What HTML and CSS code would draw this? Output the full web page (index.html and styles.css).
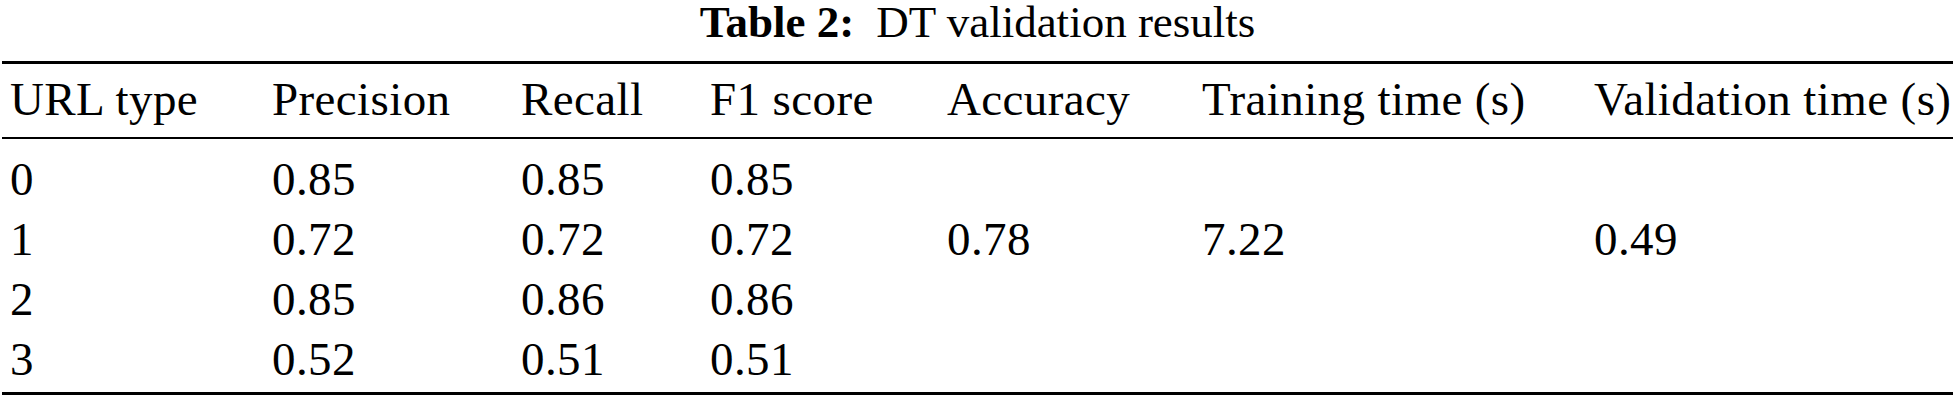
FILE: index.html
```html
<!DOCTYPE html>
<html lang="en">
<head>
<meta charset="utf-8">
<title>Table 2: DT validation results</title>
<link rel="stylesheet" href="styles.css">
</head>
<body>
<div class="caption"><span class="label">Table 2:</span>DT validation results</div>
<table class="results">
  <colgroup>
    <col class="c1"><col class="c2"><col class="c3"><col class="c4"><col class="c5"><col class="c6"><col class="c7">
  </colgroup>
  <thead>
    <tr><th>URL type</th><th>Precision</th><th>Recall</th><th>F1 score</th><th>Accuracy</th><th>Training time (s)</th><th>Validation time (s)</th></tr>
  </thead>
  <tbody>
    <tr class="first"><td>0</td><td>0.85</td><td>0.85</td><td>0.85</td><td></td><td></td><td></td></tr>
    <tr><td>1</td><td>0.72</td><td>0.72</td><td>0.72</td><td>0.78</td><td>7.22</td><td>0.49</td></tr>
    <tr><td>2</td><td>0.85</td><td>0.86</td><td>0.86</td><td></td><td></td><td></td></tr>
    <tr class="last"><td>3</td><td>0.52</td><td>0.51</td><td>0.51</td><td></td><td></td><td></td></tr>
  </tbody>
</table>
</body>
</html>
```
FILE: styles.css
```css
html, body {
  margin: 0;
  padding: 0;
  background: #ffffff;
}
body {
  font-family: "Liberation Serif", "Times New Roman", serif;
  color: #000000;
}
.caption {
  text-align: center;
  font-size: 45px;
  line-height: 44px;
  height: 44px;
  margin-bottom: 17px;
  white-space: nowrap;
}
.caption .label {
  font-weight: bold;
  margin-right: 22px;
}
.results {
  margin: 0 0 0 2px;
  width: 1951px;
  table-layout: fixed;
  border-collapse: collapse;
  font-size: 47px;
  line-height: 60px;
  letter-spacing: 0.4px;
}
.c1 { width: 270px; }
.c2 { width: 249px; }
.c3 { width: 189px; }
.c4 { width: 237px; }
.c5 { width: 255px; }
.c6 { width: 392px; }
.c7 { width: 359px; }
.results th,
.results td {
  text-align: left;
  font-weight: normal;
  padding: 0;
  white-space: nowrap;
  vertical-align: middle;
}
.results th:first-child,
.results td:first-child {
  padding-left: 8px;
}
.results thead tr {
  border-top: 3px solid #000;
  border-bottom: 2px solid #000;
}
.results thead th {
  padding-top: 5px;
  padding-bottom: 8px;
}
.results tbody tr.first td {
  padding-top: 10px;
}
.results tbody tr.last {
  border-bottom: 3px solid #000;
}
.results tbody tr.last td {
  padding-bottom: 3px;
}
```
